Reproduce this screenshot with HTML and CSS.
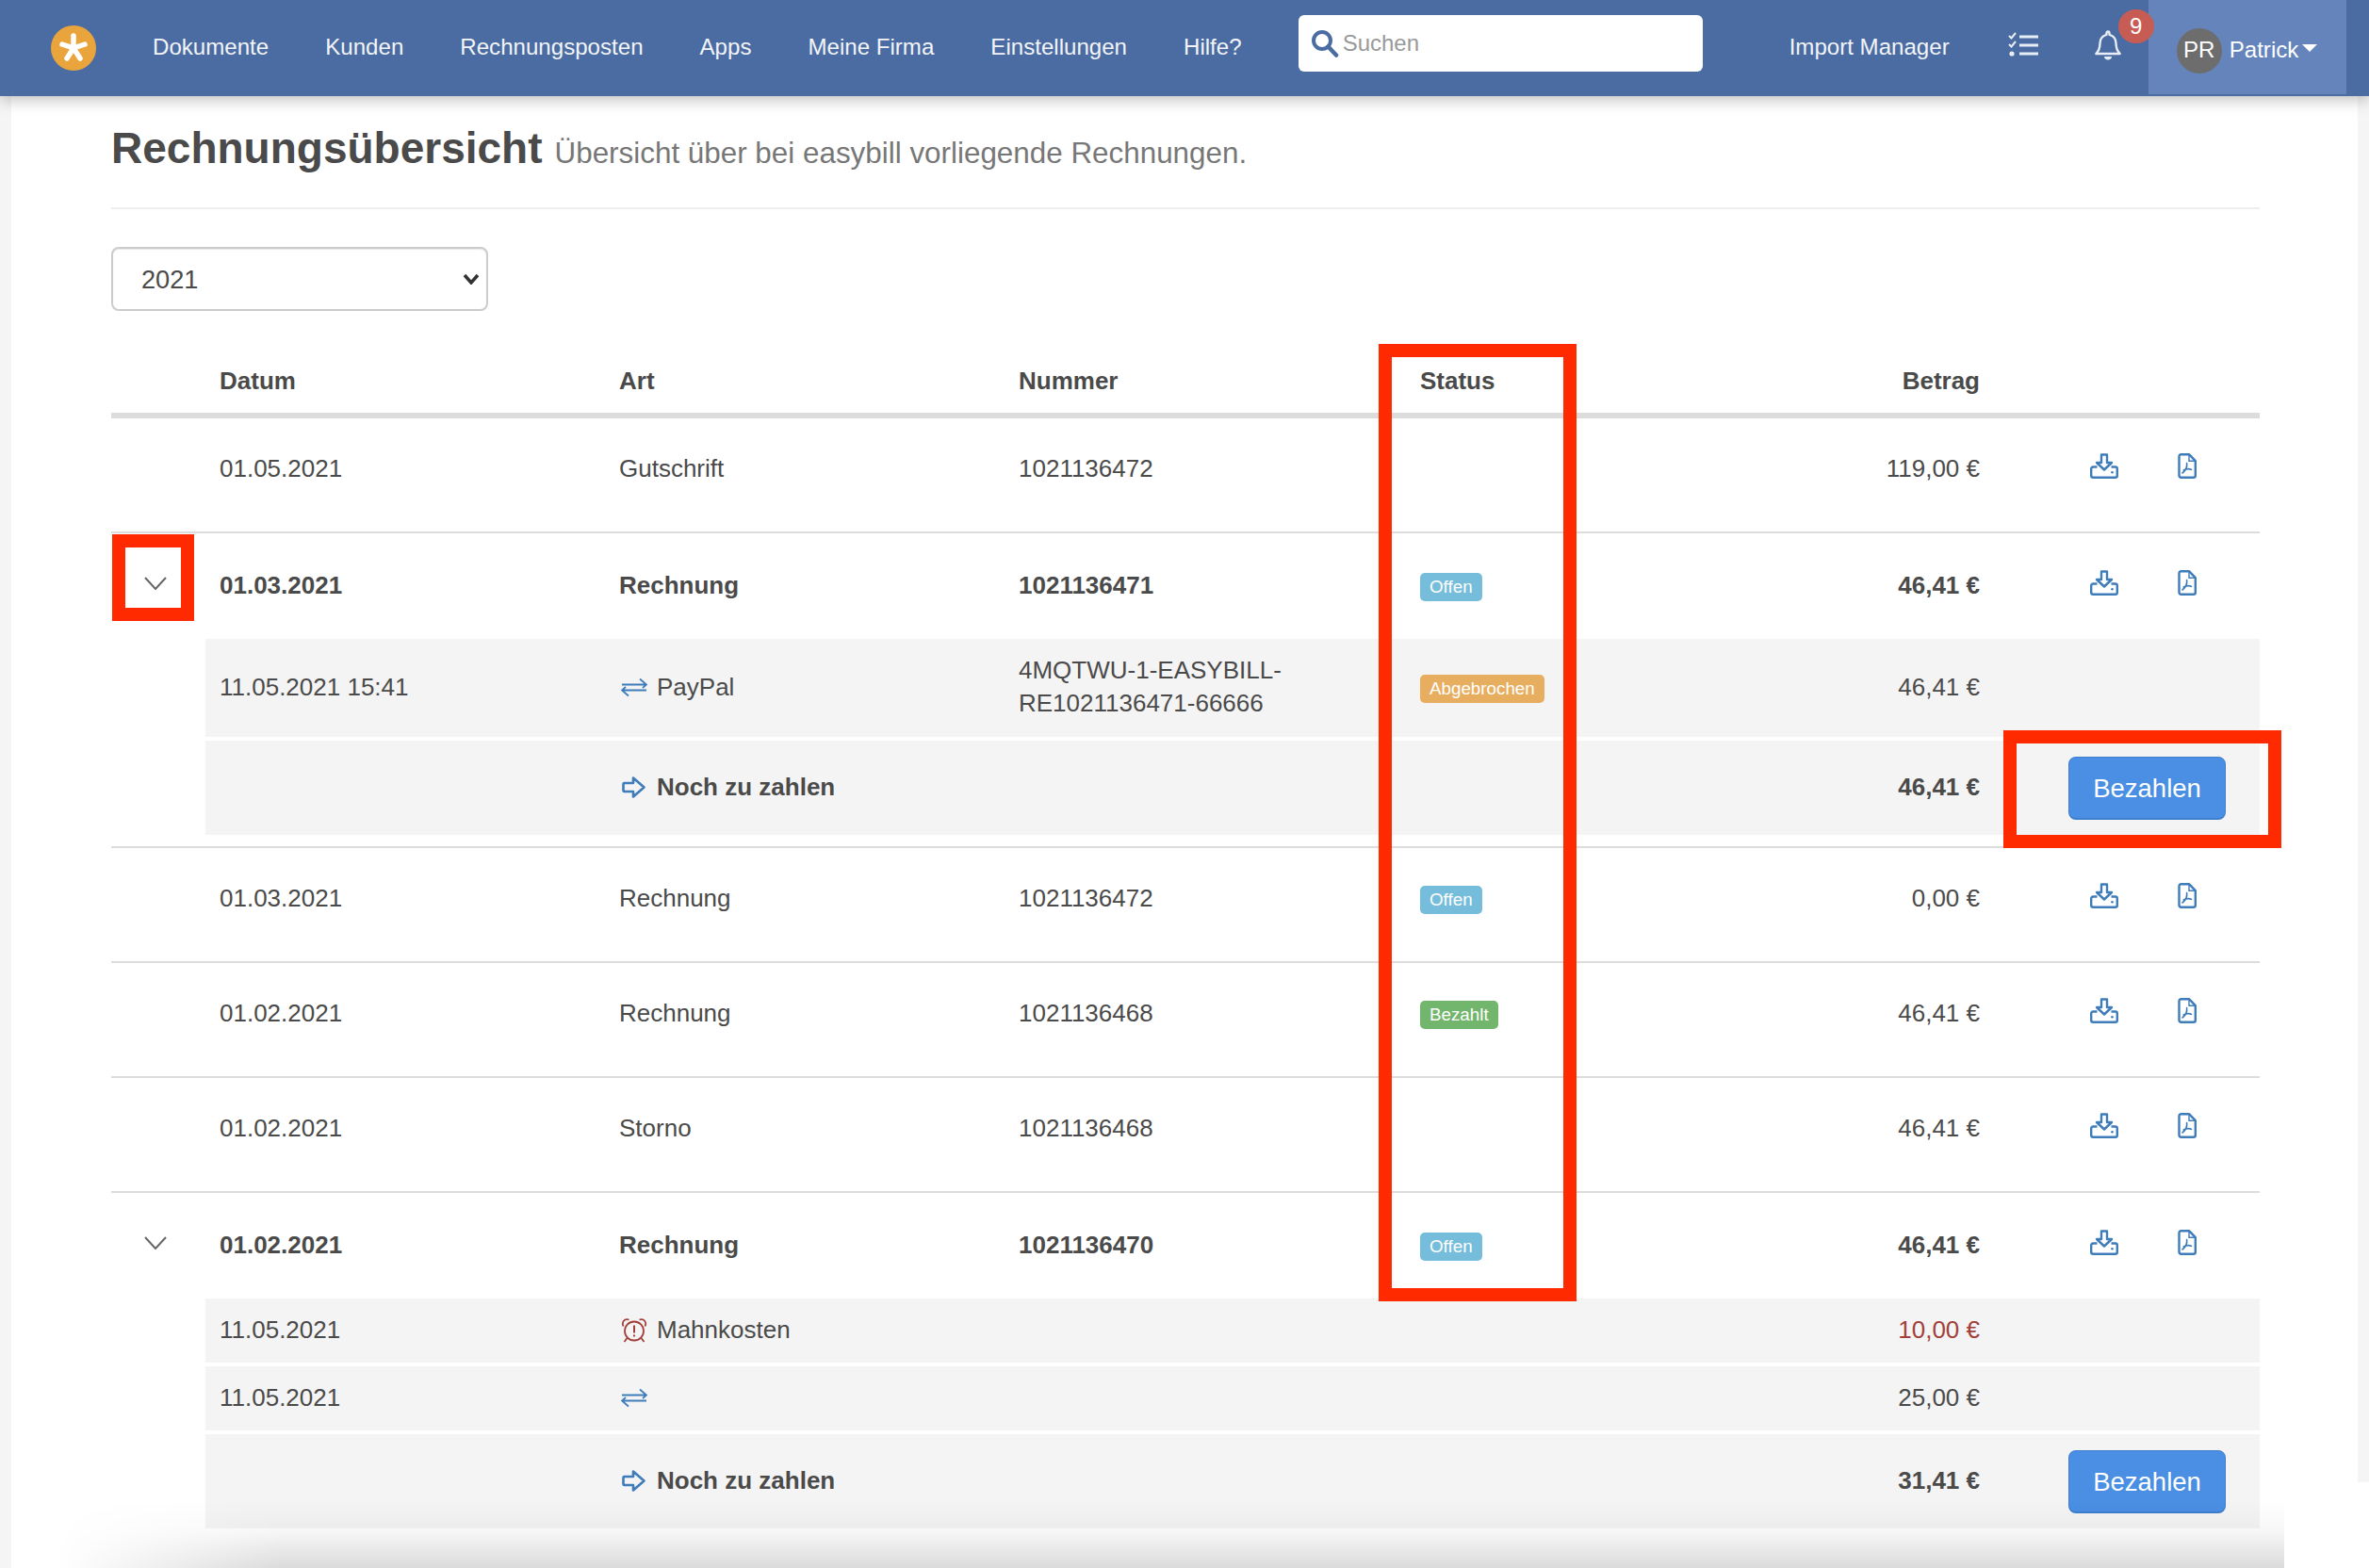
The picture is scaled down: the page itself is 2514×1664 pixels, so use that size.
FILE: index.html
```html
<!DOCTYPE html>
<html lang="de">
<head>
    <meta charset="UTF-8">
    <meta name="viewport" content="width=device-width, initial-scale=1.0">
    <title>Rechnungsübersicht</title>
    <link rel="stylesheet" href="styles.css">
</head>
<body>
    <!-- shared icons -->
    <svg class="sprite" aria-hidden="true">
        <symbol id="i-download" viewBox="0 0 30 27">
            <path d="M12 1.5h6v8.5h5l-8 7.500-8-7.500h5z" fill="none" stroke="currentColor" stroke-width="2.4" stroke-linejoin="round"/>
            <path d="M7.5 14.5H3.2A2 2 0 0 0 1.2 16.5v7.3a2 2 0 0 0 2 2h23.6a2 2 0 0 0 2-2v-7.3a2 2 0 0 0-2-2h-4.3" fill="none" stroke="currentColor" stroke-width="2.4"/>
            <circle cx="23.5" cy="20.3" r="1.3" fill="currentColor"/>
        </symbol>
        <symbol id="i-pdf" viewBox="0 0 20 27">
            <path d="M3.5 1.2h8.5l6.8 7v15.6a2 2 0 0 1-2 2H3.5a2 2 0 0 1-2-2V3.2a2 2 0 0 1 2-2z" fill="none" stroke="currentColor" stroke-width="2.4" stroke-linejoin="round"/>
            <path d="M12 1.5v6.8h6.5" fill="none" stroke="currentColor" stroke-width="1.4"/>
            <path d="M9.6 10.5c.6 4-1.4 8-4.6 10.5M6.2 18c3-1.4 6-1.800 8.4-.6" fill="none" stroke="currentColor" stroke-width="1.6" stroke-linecap="round"/>
        </symbol>
        <symbol id="i-transfer" viewBox="0 0 28 20">
            <path d="M1 7H27M20 1l7 6-4 3.500M27 13H1M8 19L1 13l4-3.500" fill="none" stroke="currentColor" stroke-width="1.800"/>
        </symbol>
        <symbol id="i-arrow" viewBox="0 0 28 24">
            <path d="M3.500 7.500h9.500V2l11.500 10L13 22v-5.500H3.500a1 1 0 0 1-1-1v-7a1 1 0 0 1 1-1z" fill="none" stroke="currentColor" stroke-width="2.600" stroke-linejoin="round"/>
        </symbol>
        <symbol id="i-alarm" viewBox="0 0 28 27">
            <circle cx="14" cy="14.5" r="10" fill="none" stroke="currentColor" stroke-width="1.8"/>
            <path d="M2.500 9.500C.5 5 3.500 1 8.500 2.500M25.500 9.500C27.500 5 24.500 1 19.500 2.500M6.500 22L3.500 26M21.500 22l3 4" fill="none" stroke="currentColor" stroke-width="1.8"/>
            <path d="M14 8.500v8M14 18.500v2" fill="none" stroke="currentColor" stroke-width="2"/>
        </symbol>
        <symbol id="i-chevron" viewBox="0 0 24 14">
            <path d="M1 1l11 12L23 1" fill="none" stroke="currentColor" stroke-width="2"/>
        </symbol>
    </svg>

    <nav class="navbar">
        <a class="logo" href="#">
            <svg viewBox="0 0 48 48" width="48" height="48">
                <circle cx="24" cy="24" r="24" fill="#e9a53c"/>
                <path d="M24 24V11M24 24L12 20M24 24l12-4M24 24l-7 11M24 24l7 11" stroke="#fff" stroke-width="5.5" stroke-linecap="round" fill="none"/>
            </svg>
        </a>
        <div class="nav-links">
            <a href="#">Dokumente</a>
            <a href="#">Kunden</a>
            <a href="#">Rechnungsposten</a>
            <a href="#">Apps</a>
            <a href="#">Meine Firma</a>
            <a href="#">Einstellungen</a>
            <a href="#">Hilfe?</a>
        </div>
        <div class="search">
            <svg viewBox="0 0 30 30" width="30" height="30">
                <circle cx="12" cy="12" r="9" fill="none" stroke="#4b6ca2" stroke-width="4"/>
                <path d="M18.500 18.500L27 27.500" stroke="#4b6ca2" stroke-width="4.5" stroke-linecap="round"/>
            </svg>
            <input type="text" placeholder="Suchen">
        </div>
        <a class="nav-import" href="#">Import Manager</a>
        <a class="nav-icon" href="#">
            <svg viewBox="0 0 32 26" width="32" height="26">
                <path d="M1 4l2.500 2.500L8 1M1 13l2.500 2.500L8 10" fill="none" stroke="#e8edf5" stroke-width="2"/>
                <circle cx="4" cy="23" r="2.6" fill="#e8edf5"/>
                <path d="M12 5h20M12 14h20M12 23h20" stroke="#e8edf5" stroke-width="3"/>
            </svg>
        </a>
        <a class="nav-bell" href="#">
            <svg viewBox="0 0 28 32" width="28" height="32">
                <path d="M14 1.500c1 0 1.500.8 1.500 2v1.300C20 6 22.500 9.500 22.500 14c0 6 1.700 8.500 4.200 11H1.300c2.500-2.500 4.200-5 4.200-11 0-4.500 2.500-8 7-9.200V3.500c0-1.200.5-2 1.500-2z" fill="none" stroke="#e8edf5" stroke-width="2.4" stroke-linejoin="round"/>
                <path d="M10 28h8c0 2-1.700 3.500-4 3.500s-4-1.500-4-3.500z" fill="#e8edf5"/>
            </svg>
            <span class="bell-count">9</span>
        </a>
        <a class="nav-user" href="#">
            <span class="avatar">PR</span>
            <span class="user-name">Patrick</span>
            <span class="caret"></span>
        </a>
    </nav>

    <main class="content">
        <div class="page-head">
            <h1>Rechnungsübersicht</h1>
            <small>Übersicht über bei easybill vorliegende Rechnungen.</small>
        </div>

        <select class="year-select">
            <option>2021</option>
            <option>2020</option>
            <option>2019</option>
        </select>

        <table class="invoices">
            <colgroup>
                <col class="col-toggle">
                <col class="col-date">
                <col class="col-type">
                <col class="col-number">
                <col class="col-status">
                <col class="col-amount">
                <col class="col-actions">
            </colgroup>
            <thead>
                <tr>
                    <th></th>
                    <th>Datum</th>
                    <th>Art</th>
                    <th>Nummer</th>
                    <th>Status</th>
                    <th class="amount">Betrag</th>
                    <th></th>
                </tr>
            </thead>
            <tbody>
                <tr class="row">
                    <td></td>
                    <td>01.05.2021</td>
                    <td>Gutschrift</td>
                    <td>1021136472</td>
                    <td></td>
                    <td class="amount">119,00 €</td>
                    <td><div class="actions"><svg class="icon-download"><use href="#i-download"/></svg><svg class="icon-pdf"><use href="#i-pdf"/></svg></div></td>
                </tr>

                <tr class="row open strong">
                    <td class="toggle"><svg class="icon-chevron"><use href="#i-chevron"/></svg></td>
                    <td>01.03.2021</td>
                    <td>Rechnung</td>
                    <td>1021136471</td>
                    <td><span class="label label-info">Offen</span></td>
                    <td class="amount">46,41 €</td>
                    <td><div class="actions"><svg class="icon-download"><use href="#i-download"/></svg><svg class="icon-pdf"><use href="#i-pdf"/></svg></div></td>
                </tr>
                <tr class="sub sub-tall">
                    <td class="blank"></td>
                    <td>11.05.2021 15:41</td>
                    <td><span class="art"><svg class="icon-art blue"><use href="#i-transfer"/></svg>PayPal</span></td>
                    <td>4MQTWU-1-EASYBILL-<br>RE1021136471-66666</td>
                    <td><span class="label label-warning">Abgebrochen</span></td>
                    <td class="amount">46,41 €</td>
                    <td></td>
                </tr>
                <tr class="sub sum strong">
                    <td class="blank"></td>
                    <td></td>
                    <td><span class="art"><svg class="icon-art blue"><use href="#i-arrow"/></svg>Noch zu zahlen</span></td>
                    <td></td>
                    <td></td>
                    <td class="amount">46,41 €</td>
                    <td class="pay"><a class="btn-pay" href="#">Bezahlen</a></td>
                </tr>
                <tr class="spacer"><td colspan="7"></td></tr>

                <tr class="row">
                    <td></td>
                    <td>01.03.2021</td>
                    <td>Rechnung</td>
                    <td>1021136472</td>
                    <td><span class="label label-info">Offen</span></td>
                    <td class="amount">0,00 €</td>
                    <td><div class="actions"><svg class="icon-download"><use href="#i-download"/></svg><svg class="icon-pdf"><use href="#i-pdf"/></svg></div></td>
                </tr>
                <tr class="row">
                    <td></td>
                    <td>01.02.2021</td>
                    <td>Rechnung</td>
                    <td>1021136468</td>
                    <td><span class="label label-success">Bezahlt</span></td>
                    <td class="amount">46,41 €</td>
                    <td><div class="actions"><svg class="icon-download"><use href="#i-download"/></svg><svg class="icon-pdf"><use href="#i-pdf"/></svg></div></td>
                </tr>
                <tr class="row">
                    <td></td>
                    <td>01.02.2021</td>
                    <td>Storno</td>
                    <td>1021136468</td>
                    <td></td>
                    <td class="amount">46,41 €</td>
                    <td><div class="actions"><svg class="icon-download"><use href="#i-download"/></svg><svg class="icon-pdf"><use href="#i-pdf"/></svg></div></td>
                </tr>

                <tr class="row open strong">
                    <td class="toggle"><svg class="icon-chevron"><use href="#i-chevron"/></svg></td>
                    <td>01.02.2021</td>
                    <td>Rechnung</td>
                    <td>1021136470</td>
                    <td><span class="label label-info">Offen</span></td>
                    <td class="amount">46,41 €</td>
                    <td><div class="actions"><svg class="icon-download"><use href="#i-download"/></svg><svg class="icon-pdf"><use href="#i-pdf"/></svg></div></td>
                </tr>
                <tr class="sub">
                    <td class="blank"></td>
                    <td>11.05.2021</td>
                    <td><span class="art"><svg class="icon-art red"><use href="#i-alarm"/></svg>Mahnkosten</span></td>
                    <td></td>
                    <td></td>
                    <td class="amount red">10,00 €</td>
                    <td></td>
                </tr>
                <tr class="sub">
                    <td class="blank"></td>
                    <td>11.05.2021</td>
                    <td><span class="art"><svg class="icon-art blue"><use href="#i-transfer"/></svg></span></td>
                    <td></td>
                    <td></td>
                    <td class="amount">25,00 €</td>
                    <td></td>
                </tr>
                <tr class="sub sum strong">
                    <td class="blank"></td>
                    <td></td>
                    <td><span class="art"><svg class="icon-art blue"><use href="#i-arrow"/></svg>Noch zu zahlen</span></td>
                    <td></td>
                    <td></td>
                    <td class="amount">31,41 €</td>
                    <td class="pay"><a class="btn-pay" href="#">Bezahlen</a></td>
                </tr>
            </tbody>
        </table>
    </main>

    <!-- red annotation frames drawn over the page -->
    <div class="mark mark-toggle"></div>
    <div class="mark mark-status"></div>
    <div class="mark mark-pay"></div>
    <div class="bottom-fade"></div>
</body>
</html>
```

FILE: styles.css
```css
* {
    box-sizing: border-box;
}

html {
    overflow: hidden;
}

body {
    position: relative;
    height: 1664px;
    margin: 0;
    overflow: hidden;
    font-family: "Liberation Sans", Arial, sans-serif;
    font-size: 26px;
    line-height: 35px;
    color: #4a4a4a;
    background:
        linear-gradient(#f5f5f5, #f5f5f5) left 102px / 12px 100% no-repeat,
        linear-gradient(#f5f5f5, #f5f5f5) right 102px / 12px 1471px no-repeat,
        #fff;
}

a {
    color: inherit;
    text-decoration: none;
}

.sprite {
    display: none;
}

/* top bar */
.navbar {
    position: relative;
    display: flex;
    align-items: center;
    height: 102px;
    padding-left: 54px;
    font-size: 24.1px;
    color: #f2f4f8;
    background-color: #4b6ca2;
    box-shadow: 0 3px 16px rgba(0, 0, 0, 0.28);
}

.logo {
    display: flex;
}

.nav-links {
    display: flex;
    gap: 60px;
    margin: -3px 0 0 60px;
}

.search {
    display: flex;
    align-items: center;
    gap: 4px;
    width: 429px;
    height: 60px;
    margin: -10px 0 0 60px;
    padding-left: 13px;
    background-color: #fff;
    border-radius: 6px;
}

.search input {
    flex: 1;
    min-width: 0;
    border: none;
    outline: none;
    padding: 0;
    font-family: inherit;
    font-size: 24px;
    color: #4a4a4a;
    background: transparent;
}

.search input::placeholder {
    color: #999;
}

.nav-import {
    margin: -3px 0 0 92px;
}

.nav-icon {
    display: flex;
    margin: -8px 0 0 62px;
}

.nav-bell {
    position: relative;
    display: flex;
    margin: -6px 0 0 60px;
}

.bell-count {
    position: absolute;
    top: -22px;
    left: 25px;
    width: 38px;
    height: 36px;
    font-size: 24px;
    line-height: 36px;
    text-align: center;
    color: #fff;
    background-color: #c75c55;
    border-radius: 50%;
}

.nav-user {
    display: flex;
    align-items: center;
    align-self: flex-start;
    width: 210px;
    height: 100px;
    margin-left: 29px;
    padding: 8px 0 0 30px;
    color: #fff;
    background-color: #6484bb;
}

.avatar {
    width: 48px;
    height: 48px;
    margin-right: 8px;
    line-height: 46px;
    text-align: center;
    background-color: #6d6d6d;
    border-radius: 50%;
}

.user-name {
    margin-top: -3px;
}

.caret {
    margin: -6px 0 0 4px;
    border-top: 8px solid #fff;
    border-left: 8px solid transparent;
    border-right: 8px solid transparent;
}

/* page */
.content {
    padding: 0 116px 0 118px;
}

.page-head {
    display: flex;
    align-items: baseline;
    gap: 13px;
    height: 120px;
    padding-top: 25px;
    border-bottom: 2px solid #eee;
}

.page-head h1 {
    margin: 0;
    font-size: 46px;
    line-height: 60px;
    font-weight: bold;
    color: #4a4a4a;
}

.page-head small {
    font-size: 31.4px;
    color: #777;
}

.year-select {
    display: block;
    width: 400px;
    height: 68px;
    margin-top: 40px;
    padding: 0 0 0 30px;
    font-family: inherit;
    font-size: 27.2px;
    color: #4a4a4a;
    background: #fff url("data:image/svg+xml,%3Csvg xmlns='http://www.w3.org/2000/svg' viewBox='0 0 18 12'%3E%3Cpath d='M2 2l7 8 7-8' fill='none' stroke='%23333' stroke-width='3.5'/%3E%3C/svg%3E") no-repeat right 7px center / 18px 12px;
    border: 2px solid #ccc;
    border-radius: 8px;
    box-shadow: inset 0 1px 1px rgba(0, 0, 0, 0.1);
    appearance: none;
    outline: none;
}

/* invoice table */
.invoices {
    width: 2280px;
    margin-top: 40px;
    table-layout: fixed;
    border-collapse: separate;
    border-spacing: 0;
}

.col-toggle { width: 100px; }
.col-date { width: 424px; }
.col-type { width: 424px; }
.col-number { width: 426px; }
.col-status { width: 300px; }
.col-amount { width: 324px; }
.col-actions { width: 282px; }

.invoices th,
.invoices td {
    padding: 0 15px;
    text-align: left;
}

.invoices th {
    height: 74px;
    vertical-align: middle;
    border-bottom: 6px solid #dcdcdc;
}

.invoices .amount {
    text-align: right;
}

.invoices .row td {
    height: 122px;
    padding-top: 36px;
    vertical-align: top;
    border-bottom: 2px solid #dcdcdc;
}

.invoices .row.open td {
    height: 112px;
    padding-top: 38px;
    border-bottom: none;
}

.strong td {
    font-weight: bold;
}

.invoices .sub td {
    height: 72px;
    padding-bottom: 2px;
    vertical-align: middle;
    background-color: #f4f4f4;
    border-bottom: 4px solid #fff;
}

.invoices .sub-tall td {
    height: 108px;
}

.invoices .sub.sum td {
    height: 100px;
    border-bottom: none;
}

.invoices .sub td.blank {
    background-color: #fff;
}

.invoices .spacer td {
    height: 14px;
    padding: 0;
    border-bottom: 2px solid #dcdcdc;
}

.invoices .red {
    color: #a23f3a;
}

.blue {
    color: #3f7cba;
}

.art {
    display: flex;
    align-items: center;
    gap: 10px;
}

.icon-art {
    width: 28px;
    height: 27px;
    margin-left: 2px;
}

.icon-chevron {
    display: block;
    width: 24px;
    height: 14px;
    margin-left: 20px;
    color: #666;
}

.invoices .row.open td.toggle {
    padding: 46px 0 0 15px;
}

.actions {
    display: flex;
    align-items: center;
    gap: 63px;
    height: 35px;
    margin: -3px 0 0 87px;
    color: #3f7cba;
}

.icon-download {
    width: 30px;
    height: 27px;
}

.icon-pdf {
    width: 20px;
    height: 27px;
}

.label {
    display: inline-block;
    height: 30px;
    padding: 0 10px;
    font-size: 18.8px;
    font-weight: normal;
    line-height: 30px;
    color: #fff;
    vertical-align: middle;
    border-radius: 5px;
}

.label-info { background-color: #76bddb; }
.label-warning { background-color: #e8ae60; }
.label-success { background-color: #72b56c; }

.invoices .sub td.pay {
    padding: 0 0 0 79px;
}

.btn-pay {
    display: block;
    width: 167px;
    height: 67px;
    font-size: 27.5px;
    font-weight: normal;
    line-height: 66px;
    text-align: center;
    color: #fff;
    background-color: #4a8fe3;
    border: 1px solid #3f7fd0;
    border-bottom-width: 2px;
    border-radius: 8px;
}

/* annotations */
.mark {
    position: absolute;
    border: 14px solid #ff2a00;
}

.mark-toggle {
    top: 567px;
    left: 119px;
    width: 87px;
    height: 92px;
}

.mark-status {
    top: 365px;
    left: 1463px;
    width: 210px;
    height: 1016px;
}

.mark-pay {
    top: 775px;
    left: 2126px;
    width: 295px;
    height: 125px;
}

.bottom-fade {
    position: absolute;
    left: 0;
    bottom: 0;
    width: 2424px;
    height: 72px;
    background: linear-gradient(rgba(0, 0, 0, 0), rgba(0, 0, 0, 0.03) 45%, rgba(0, 0, 0, 0.14));
    -webkit-mask-image: linear-gradient(90deg, transparent 60px, #000 300px);
    mask-image: linear-gradient(90deg, transparent 60px, #000 300px);
}
```
